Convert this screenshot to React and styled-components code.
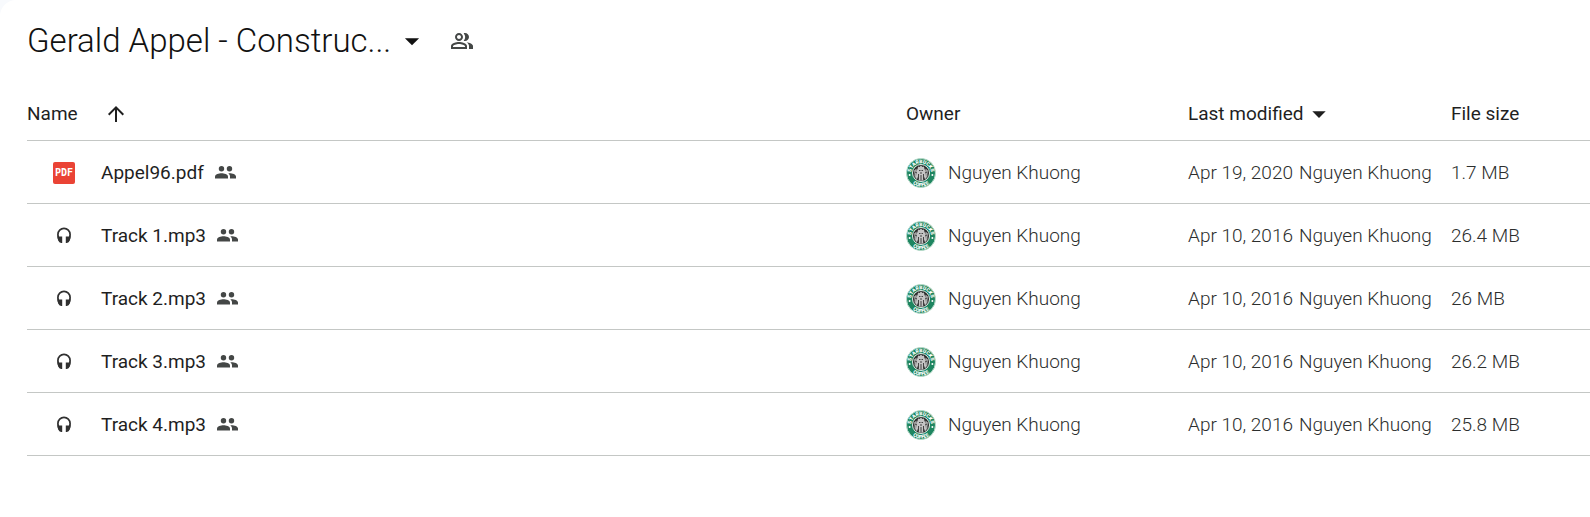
import styled, { createGlobalStyle } from "styled-components";
import { MdArrowDropDown, MdArrowUpward, MdOutlinePeopleAlt } from "react-icons/md";

const owner = "Nguyen Khuong";

const files = [
  { name: "Appel96.pdf", type: "pdf", modified: "Apr 19, 2020", size: "1.7 MB" },
  { name: "Track 1.mp3", type: "audio", modified: "Apr 10, 2016", size: "26.4 MB" },
  { name: "Track 2.mp3", type: "audio", modified: "Apr 10, 2016", size: "26 MB" },
  { name: "Track 3.mp3", type: "audio", modified: "Apr 10, 2016", size: "26.2 MB" },
  { name: "Track 4.mp3", type: "audio", modified: "Apr 10, 2016", size: "25.8 MB" },
];

const PdfIcon = () => (
  <svg width="22" height="22" viewBox="0 0 22 22" aria-hidden="true">
    <rect width="22" height="22" rx="2" fill="#ea4335" />
    <PdfText x="11" y="14" textAnchor="middle">
      PDF
    </PdfText>
  </svg>
);

const AudioIcon = () => (
  <svg width="14" height="18" viewBox="0 0 14 18" aria-hidden="true">
    <path
      d="M3.500 15C1.500 13 .9 10.500.9 7.500a6.100 6.100 0 0 1 12.200 0c0 3-.6 5.500-2.600 7.500"
      fill="none"
      stroke="#303030"
      strokeWidth="1.700"
    />
    <path
      d="M5.200 9.500V16H4C2.300 15.500.6 13 .6 9.500zM8.800 9.500V16h1.200c1.700-.5 3.400-3 3.400-6.500z"
      fill="#303030"
    />
  </svg>
);

const SharedIcon = () => (
  <svg width="21" height="13" viewBox="0 0 21 13" aria-label="Shared" role="img">
    <g fill="#444746">
      <circle cx="6.500" cy="2.700" r="2.700" />
      <circle cx="14.500" cy="2.700" r="2.700" />
      <path d="M0 12.500v-2C0 8.300 4 7.200 6.500 7.200s6.500 1.100 6.500 3.300v2z" />
      <path d="M15 12.500v-2c0-1.400-.7-2.400-1.700-3.200 3-.4 7.700.8 7.700 3.200v2z" />
    </g>
  </svg>
);

const Avatar = () => (
  <svg width="30" height="30" viewBox="0 0 30 30" aria-hidden="true">
    <defs>
      <path id="ringTop" d="M5.200 15a9.800 9.800 0 0 1 19.600 0" />
      <path id="ringBottom" d="M1.500 15a13.500 13.500 0 0 0 27 0" />
    </defs>
    <circle cx="15" cy="15" r="14.500" fill="#1e8560" stroke="#b9dccb" />
    <circle cx="15" cy="15" r="8.500" fill="#262626" stroke="#dfeee7" />
    <text fontSize="5" fontWeight="900" fill="#fff" textAnchor="middle">
      <textPath href="#ringTop" startOffset="50%">STARBUCKS</textPath>
    </text>
    <text fontSize="5" fontWeight="900" fill="#fff" textAnchor="middle">
      <textPath href="#ringBottom" startOffset="50%">COFFEE</textPath>
    </text>
    <circle cx="3.600" cy="17" r="1" fill="#fff" />
    <circle cx="26.400" cy="17" r="1" fill="#fff" />
    <path
      d="M15 7.500l1.500 1.500 1.500-.5.500 2.500c2 3 1.500 5 3 7l-2.500 3.500-1-3-1 4h-4l-1-4-1 3L8.500 18c1.500-2 1-4 3-7l.5-2.500 1.500.5z"
      fill="#c4c4c4"
    />
    <path d="M8 12.500l2.500-2 .5 6-2 3.500zM22 12.500l-2.500-2-.5 6 2 3.500z" fill="#a8a8a8" />
    <path
      d="M13 12.500h1.500M15.500 12.500H17M14 15h2M9 14l2 1M21 14l-2 1M12.500 16v5M17.500 16v5M15 17v5"
      stroke="#333"
      strokeWidth=".9"
    />
  </svg>
);

const FileRow = ({ file }) => (
  <tr>
    <Cell>
      <NameContent>
        <FileIcon>{file.type === "pdf" ? <PdfIcon /> : <AudioIcon />}</FileIcon>
        <FileName>{file.name}</FileName>
        <SharedIcon />
      </NameContent>
    </Cell>
    <Cell>
      <OwnerContent>
        <Avatar />
        {owner}
      </OwnerContent>
    </Cell>
    <Cell>
      <ModifiedContent>
        <span>{file.modified}</span>
        <span>{owner}</span>
      </ModifiedContent>
    </Cell>
    <Cell>{file.size}</Cell>
  </tr>
);

const App = () => {
  return (
    <>
      <GlobalStyle />
      <Panel>
        <Header>
          <Title>
            <TitleButton type="button">
              Gerald Appel - Construc...
              <MdArrowDropDown size={34} />
            </TitleButton>
          </Title>
          <IconButton type="button" aria-label="Manage sharing">
            <MdOutlinePeopleAlt size={24} />
          </IconButton>
        </Header>
        <Table>
          <thead>
            <tr>
              <HeadCell>
                <SortButton type="button" $gap="26px">
                  Name
                  <MdArrowUpward size={24} />
                </SortButton>
              </HeadCell>
              <HeadCell $width="282px">Owner</HeadCell>
              <HeadCell $width="263px">
                <SortButton type="button">
                  Last modified
                  <MdArrowDropDown size={32} />
                </SortButton>
              </HeadCell>
              <HeadCell $width="139px">File size</HeadCell>
            </tr>
          </thead>
          <tbody>
            {files.map((file) => (
              <FileRow key={file.name} file={file} />
            ))}
          </tbody>
        </Table>
      </Panel>
    </>
  );
};

const GlobalStyle = createGlobalStyle`
  * {
    box-sizing: border-box;
  }

  body {
    margin: 0;
    background: #f8fafd;
    color: #1f1f1f;
    font-family: "Google Sans", Roboto, "Liberation Sans", sans-serif;
    font-size: 19px;
    line-height: 24px;
  }

  button {
    padding: 0;
    border: 0;
    background: none;
    color: inherit;
    font: inherit;
    cursor: pointer;
  }

  svg {
    display: block;
    flex: none;
  }
`;

const Panel = styled.main`
  min-height: 100vh;
  padding-left: 27px;
  border-top-left-radius: 16px;
  background: #fff;
`;

const Header = styled.header`
  display: flex;
  align-items: center;
  gap: 21px;
  height: 86px;
  padding-bottom: 4px;
`;

const Title = styled.h1`
  margin: 0;
  color: #111;
  font-size: 33px;
  font-weight: 300;
  line-height: 40px;
`;

const TitleButton = styled.button`
  display: flex;
  align-items: center;
  gap: 4px;
`;

const IconButton = styled.button`
  color: #444746;
`;

const Table = styled.table`
  width: 100%;
  border-collapse: collapse;
  table-layout: fixed;
`;

const HeadCell = styled.th`
  width: ${(props) => props.$width || "auto"};
  height: 54px;
  padding: 2px 0 0;
  border-bottom: 1px solid #c4c7c5;
  font-weight: 400;
  text-align: left;
`;

const SortButton = styled.button`
  display: flex;
  align-items: center;
  gap: ${(props) => props.$gap || "0"};
  height: 24px;
`;

const Cell = styled.td`
  height: 63px;
  padding: 2px 0 0;
  border-bottom: 1px solid #c4c7c5;
  color: #2c2e2d;
  font-weight: 300;
  white-space: nowrap;
`;

const NameContent = styled.div`
  display: flex;
  align-items: center;
`;

const FileIcon = styled.span`
  display: flex;
  justify-content: center;
  width: 74px;
`;

const PdfText = styled.text`
  fill: #fff;
  font-family: "DejaVu Sans Mono", monospace;
  font-size: 10px;
  font-weight: 700;
`;

const FileName = styled.span`
  margin-right: 11px;
  color: #1f1f1f;
  font-weight: 400;
`;

const OwnerContent = styled.div`
  display: flex;
  align-items: center;
  gap: 12px;
`;

const ModifiedContent = styled.div`
  display: flex;
  gap: 6px;
`;

export default App;
